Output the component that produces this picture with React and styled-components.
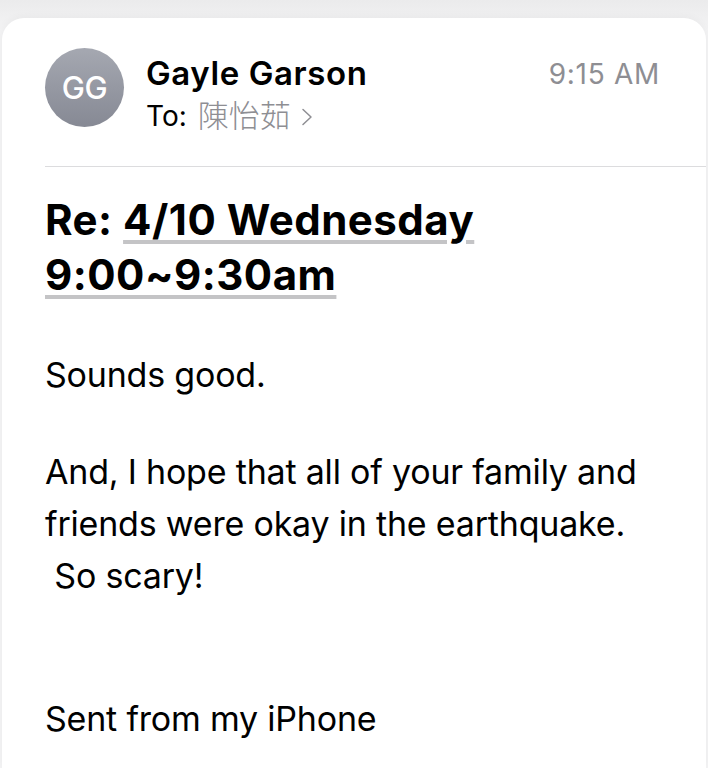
import styled, { createGlobalStyle } from 'styled-components';

const GlobalStyle = createGlobalStyle`
  html, body {
    margin: 0;
    padding: 0;
    background: linear-gradient(180deg, #ebebec 0%, #f3f3f4 30px);
  }
  body {
    font-family: Inter, 'Noto Sans CJK TC', sans-serif;
    color: #000;
    -webkit-font-smoothing: antialiased;
  }
`;

const Page = styled.div`
  width: 708px;
  height: 768px;
  overflow: hidden;
  padding: 18px 2px 0;
  box-sizing: border-box;
`;

const Card = styled.div`
  background: #fff;
  border-radius: 22px 22px 0 0;
  height: 100%;
  box-shadow: 0 -1px 8px rgba(0, 0, 0, 0.04);
  padding: 30px 0 0 43px;
  box-sizing: border-box;
`;

const Header = styled.div`
  display: flex;
  align-items: flex-start;
  padding-right: 46px;
  padding-bottom: 30px;
  border-bottom: 1px solid #dcdcde;
`;

const Avatar = styled.div`
  width: 79px;
  height: 79px;
  border-radius: 50%;
  background: linear-gradient(180deg, #a5a8b1 0%, #868994 100%);
  color: #fff;
  display: flex;
  align-items: center;
  justify-content: center;
  font-size: 31px;
  font-weight: 500;
  letter-spacing: -0.3px;
  flex-shrink: 0;
`;

const Sender = styled.div`
  flex: 1;
  margin-left: 22px;
  padding-top: 4px;
  display: flex;
  flex-direction: column;
`;

const Name = styled.div`
  font-size: 33px;
  font-weight: 600;
  letter-spacing: 0.6px;
  line-height: 42px;
`;

const To = styled.div`
  margin-top: 2px;
  font-size: 28px;
  line-height: 40px;
  display: flex;
  align-items: center;
`;

const Recipient = styled.span`
  color: #8e8e93;
  font-size: 31px;
  font-weight: 300;
  margin-left: 11px;
`;

const Chevron = styled.svg`
  width: 12px;
  height: 20px;
  margin-left: 10px;
  margin-top: 2px;
`;

const Time = styled.div`
  padding-top: 5px;
  font-size: 28px;
  color: #8e8e93;
  letter-spacing: 0.7px;
  line-height: 42px;
`;

const Subject = styled.h1`
  margin: 25px 0 0;
  font-size: 42px;
  font-weight: 700;
  line-height: 55px;
  letter-spacing: 0.5px;
`;

const DateLink = styled.span`
  text-decoration: underline;
  text-decoration-color: #c4c4c6;
  text-decoration-thickness: 4px;
  text-underline-offset: 5px;
  text-decoration-skip-ink: auto;
`;

const Body = styled.div`
  margin-top: 47px;
  font-size: 34px;
  line-height: 52px;
  letter-spacing: -0.2px;
`;

const Para = styled.p`
  margin: 0 0 ${(p) => p.$gap || 45}px;
`;

function App() {
  return (
    <>
      <GlobalStyle />
      <Page>
        <Card>
          <Header>
            <Avatar>GG</Avatar>
            <Sender>
              <Name>Gayle Garson</Name>
              <To>
                To:<Recipient>陳怡茹</Recipient>
                <Chevron viewBox="0 0 12 20">
                  <path
                    d="M2 2.5l8 7.5-8 7.5"
                    fill="none"
                    stroke="#8e8e93"
                    strokeWidth="1.5"
                    strokeLinecap="round"
                    strokeLinejoin="round"
                  />
                </Chevron>
              </To>
            </Sender>
            <Time>9:15 AM</Time>
          </Header>
          <Subject>
            Re: <DateLink>4/10 Wednesday</DateLink>
            <br />
            <DateLink>9:00~9:30am</DateLink>
          </Subject>
          <Body>
            <Para>Sounds good.</Para>
            <Para $gap={91}>
              And, I hope that all of your family and
              <br />
              friends were okay in the earthquake.
              <br />
              &nbsp;So scary!
            </Para>
            <Para>Sent from my iPhone</Para>
          </Body>
        </Card>
      </Page>
    </>
  );
}

export default App;
